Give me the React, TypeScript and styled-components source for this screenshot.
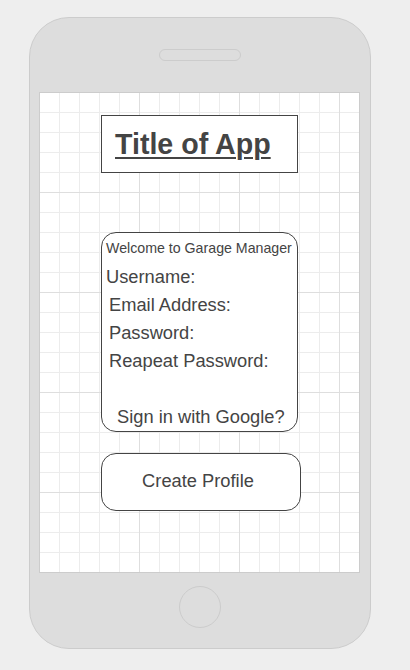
import React from 'react';
import styled, { createGlobalStyle } from 'styled-components';

const GlobalStyle = createGlobalStyle`
  body {
    margin: 0;
    background: #eeeeee;
    font-family: "Liberation Sans", Arial, sans-serif;
  }
`

const fields = ['Email Address:', 'Password:', 'Reapeat Password:'];

const App: React.FC = () => {
  return (
    <>
      <GlobalStyle />
      <Page>
        <Phone>
          <Speaker />
          <Screen>
            <TitleBox>
              <Title>Title of App</Title>
            </TitleBox>
            <FormCard>
              <Welcome>Welcome to Garage Manager</Welcome>
              <Field indent={0}>Username:</Field>
              {fields.map((f) => (
                <Field key={f} indent={3}>{f}</Field>
              ))}
              <GoogleLink>Sign in with Google?</GoogleLink>
            </FormCard>
            <CreateButton>Create Profile</CreateButton>
          </Screen>
          <HomeButton />
        </Phone>
      </Page>
    </>
  );
}

export default App;

const Page = styled.div`
  padding: 17px 0 0 29px;
`

const Phone = styled.div`
  box-sizing: border-box;
  width: 342px;
  height: 632px;
  background: #dddddd;
  border: 1px solid #cccccc;
  border-radius: 40px;
  display: flex;
  flex-direction: column;
  align-items: center;
  padding-top: 31px;
`

const Speaker = styled.div`
  box-sizing: border-box;
  width: 82px;
  height: 12px;
  border: 1px solid #cccccc;
  border-radius: 6px;
  background: #dddddd;
  margin-bottom: 31px;
`

const Screen = styled.div`
  box-sizing: border-box;
  align-self: flex-start;
  margin-left: 9px;
  width: 321px;
  height: 481px;
  border: 1px solid #cccccc;
  background-color: #ffffff;
  background-origin: border-box;
  background-image:
    linear-gradient(to right, #dedede 1px, transparent 1px),
    linear-gradient(to bottom, #dedede 1px, transparent 1px),
    linear-gradient(to right, #ececec 1px, transparent 1px),
    linear-gradient(to bottom, #ececec 1px, transparent 1px);
  background-size: 100px 100px, 100px 100px, 20px 20px, 20px 20px;
  display: flex;
  flex-direction: column;
  align-items: flex-start;
  padding: 22px 0 0 61px;
  color: #444444;
`

const TitleBox = styled.div`
  box-sizing: border-box;
  width: 197px;
  height: 58px;
  border: 1px solid #444444;
  background: #ffffff;
  padding: 12px 13px 0;
  white-space: nowrap;
`

const Title = styled.span`
  font-size: 28.6px;
  line-height: 32px;
  font-weight: 700;
  text-decoration: underline;
  text-decoration-thickness: 2px;
  text-underline-offset: 3px;
`

const FormCard = styled.div`
  box-sizing: border-box;
  width: 197px;
  height: 200px;
  margin-top: 59px;
  border: 1px solid #444444;
  border-radius: 15px;
  background: #ffffff;
  padding: 7px 0 0 4px;
  display: flex;
  flex-direction: column;
  white-space: nowrap;
`

const Welcome = styled.div`
  font-size: 14.2px;
  line-height: 16px;
  margin-bottom: 7px;
`

const Field = styled.div<{ indent: number }>`
  font-size: 18.3px;
  line-height: 28px;
  padding-left: ${(p) => p.indent}px;
`

const GoogleLink = styled.div`
  font-size: 18.3px;
  line-height: 28px;
  margin-top: 28px;
  padding-left: 11px;
`

const CreateButton = styled.div`
  box-sizing: border-box;
  width: 200px;
  height: 58px;
  margin-top: 21px;
  border: 1px solid #444444;
  border-radius: 15px;
  background: #ffffff;
  display: flex;
  align-items: center;
  justify-content: center;
  font-size: 18.3px;
  padding: 0 6px 2px 0;
`

const HomeButton = styled.div`
  box-sizing: border-box;
  width: 42px;
  height: 42px;
  margin-top: 13px;
  border: 1px solid #cccccc;
  border-radius: 50%;
  background: #dddddd;
`
